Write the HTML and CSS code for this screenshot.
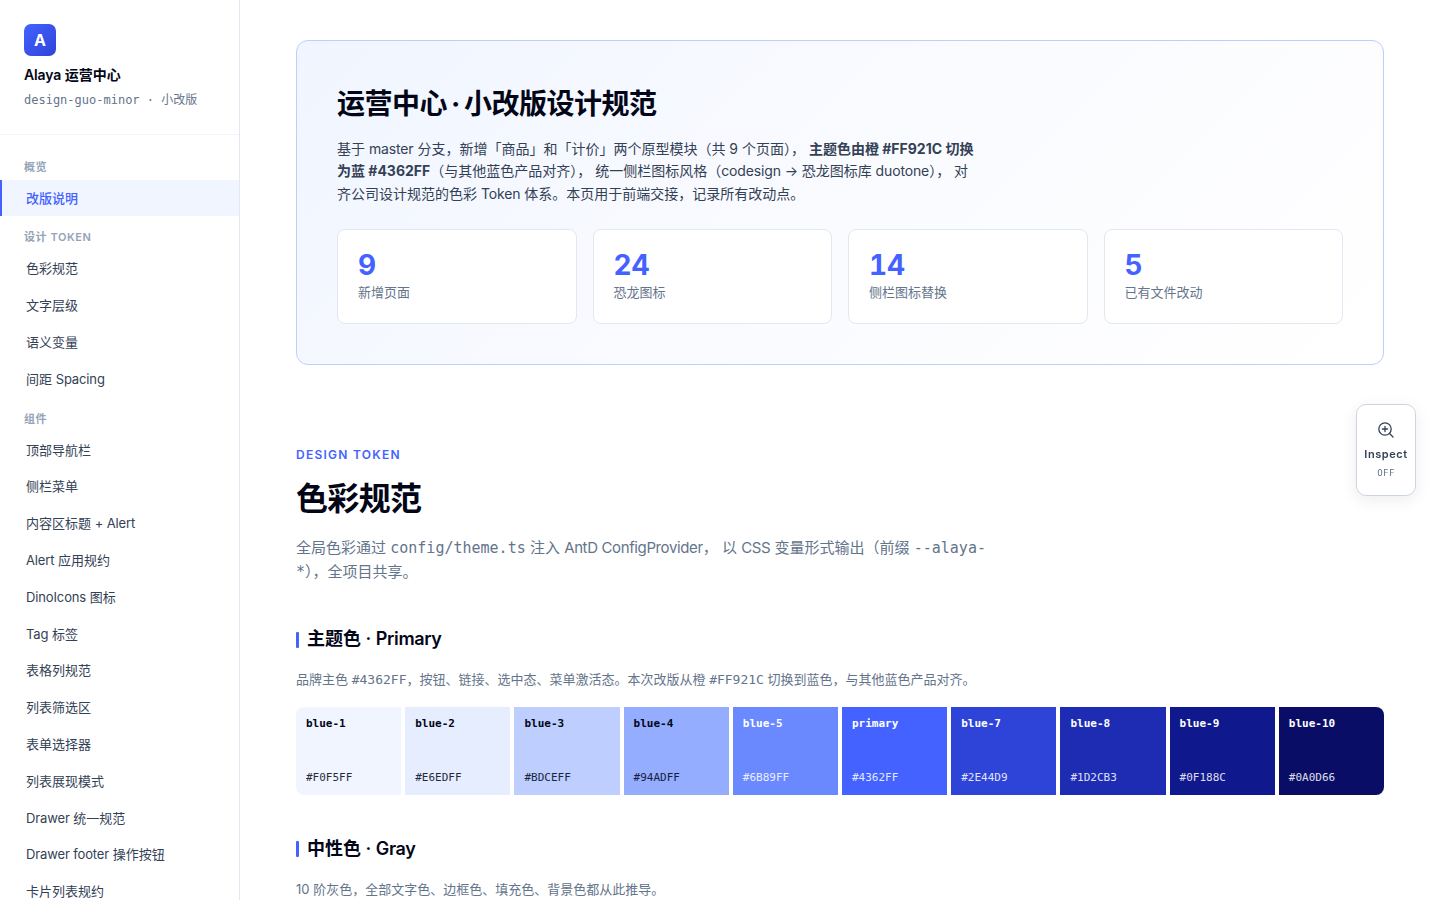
FILE: index.html
```
<!DOCTYPE html>
<html lang="zh-CN">
<head>
    <meta charset="UTF-8">
    <meta name="viewport" content="width=device-width, initial-scale=1.0">
    <title>Alaya 运营中心 · 小改版设计规范</title>
    <link rel="stylesheet" href="styles.css">
</head>
<body>
    <aside class="sidebar">
        <div class="sidebar-header">
            <div class="logo">A</div>
            <div class="sidebar-title"><span class="en">Alaya</span> 运营中心</div>
            <div class="sidebar-sub">design-guo-minor · 小改版</div>
        </div>
        <nav class="nav">
            <div class="nav-group">概览</div>
            <a class="nav-item active" href="#intro">改版说明</a>
            <div class="nav-group">设计 Token</div>
            <a class="nav-item" href="#color">色彩规范</a>
            <a class="nav-item" href="#typo">文字层级</a>
            <a class="nav-item" href="#vars">语义变量</a>
            <a class="nav-item" href="#spacing">间距 <span class="en">Spacing</span></a>
            <div class="nav-group">组件</div>
            <a class="nav-item" href="#topnav">顶部导航栏</a>
            <a class="nav-item" href="#sidemenu">侧栏菜单</a>
            <a class="nav-item" href="#content">内容区标题 <span class="en">+ Alert</span></a>
            <a class="nav-item" href="#alert"><span class="en">Alert</span> 应用规约</a>
            <a class="nav-item" href="#icons"><span class="en">DinoIcons</span> 图标</a>
            <a class="nav-item" href="#tag"><span class="en">Tag</span> 标签</a>
            <a class="nav-item" href="#table">表格列规范</a>
            <a class="nav-item" href="#filter">列表筛选区</a>
            <a class="nav-item" href="#select">表单选择器</a>
            <a class="nav-item" href="#list">列表展现模式</a>
            <a class="nav-item" href="#drawer"><span class="en">Drawer</span> 统一规范</a>
            <a class="nav-item" href="#drawer-footer"><span class="en">Drawer footer</span> 操作按钮</a>
            <a class="nav-item" href="#cards">卡片列表规约</a>
        </nav>
    </aside>

    <main class="main">
        <section class="hero" id="intro">
            <h1>运营中心 · 小改版设计规范</h1>
            <p>
                基于 <span class="en">master</span> 分支，新增「商品」和「计价」两个原型模块（共 9 个页面），
                <strong>主题色由橙 #FF921C 切换为蓝 #4362FF</strong>（与其他蓝色产品对齐），
                统一侧栏图标风格（<span class="en">codesign → </span>恐龙图标库 <span class="en">duotone</span>），
                对齐公司设计规范的色彩 <span class="en">Token</span> 体系。本页用于前端交接，记录所有改动点。
            </p>
            <div class="stats">
                <div class="stat">
                    <div class="stat-num">9</div>
                    <div class="stat-label">新增页面</div>
                </div>
                <div class="stat">
                    <div class="stat-num">24</div>
                    <div class="stat-label">恐龙图标</div>
                </div>
                <div class="stat">
                    <div class="stat-num">14</div>
                    <div class="stat-label">侧栏图标替换</div>
                </div>
                <div class="stat">
                    <div class="stat-num">5</div>
                    <div class="stat-label">已有文件改动</div>
                </div>
            </div>
        </section>

        <section class="section" id="color">
            <div class="eyebrow">Design Token</div>
            <h2>色彩规范</h2>
            <p class="lead">
                全局色彩通过 <code>config/theme.ts</code> 注入 <span class="en">AntD ConfigProvider</span>，
                以 <span class="en">CSS</span> 变量形式输出（前缀 <code>--alaya-*</code>），全项目共享。
            </p>

            <h3>主题色 · <span class="en">Primary</span></h3>
            <p class="desc">品牌主色 <code>#4362FF</code>，按钮、链接、选中态、菜单激活态。本次改版从橙 <code>#FF921C</code> 切换到蓝色，与其他蓝色产品对齐。</p>
            <div class="palette">
                <div class="swatch blue-1"><b>blue-1</b><span>#F0F5FF</span></div>
                <div class="swatch blue-2"><b>blue-2</b><span>#E6EDFF</span></div>
                <div class="swatch blue-3"><b>blue-3</b><span>#BDCEFF</span></div>
                <div class="swatch blue-4"><b>blue-4</b><span>#94ADFF</span></div>
                <div class="swatch blue-5 on-dark"><b>blue-5</b><span>#6B89FF</span></div>
                <div class="swatch primary on-dark"><b>primary</b><span>#4362FF</span></div>
                <div class="swatch blue-7 on-dark"><b>blue-7</b><span>#2E44D9</span></div>
                <div class="swatch blue-8 on-dark"><b>blue-8</b><span>#1D2CB3</span></div>
                <div class="swatch blue-9 on-dark"><b>blue-9</b><span>#0F188C</span></div>
                <div class="swatch blue-10 on-dark"><b>blue-10</b><span>#0A0D66</span></div>
            </div>

            <h3>中性色 · <span class="en">Gray</span></h3>
            <p class="desc">10 阶灰色，全部文字色、边框色、填充色、背景色都从此推导。</p>
        </section>
    </main>

    <button class="inspect" type="button">
        <svg width="18" height="18" viewBox="0 0 18 18" fill="none" stroke="currentColor" stroke-width="1.3" stroke-linecap="round">
            <circle cx="8" cy="8" r="6.2"/>
            <path d="M12.5 12.5L16 16M8 5.4v5.2M5.4 8h5.2"/>
        </svg>
        <span class="inspect-label">Inspect</span>
        <span class="inspect-state">OFF</span>
    </button>
</body>
</html>
```
FILE: styles.css
```
:root {
    --primary: #4362ff;
    --text: #020617;
    --text-2: #334155;
    --text-3: #64748b;
    --text-4: #94a3b8;
    --border: #e2e8f0;
    --mono: "DejaVu Sans Mono", "Noto Sans CJK SC", monospace;
}
* {
    box-sizing: border-box;
    margin: 0;
    padding: 0;
}
html, body {
    height: 100%;
    overflow: hidden;
}
body {
    display: flex;
    font-family: Inter, "Noto Sans CJK SC", sans-serif;
    font-size: 14px;
    line-height: 1.6;
    color: var(--text);
    background: #fff;
}
code {
    font-family: var(--mono);
    line-height: 1;
}
.en {
    letter-spacing: -0.01em;
}

/* Sidebar */
.sidebar {
    width: 240px;
    flex-shrink: 0;
    height: 100vh;
    overflow: hidden;
    border-right: 1px solid var(--border);
}
.sidebar-header {
    padding: 24px 24px 23px;
    border-bottom: 1px solid #f1f5f9;
}
.logo {
    width: 32px;
    height: 32px;
    margin-bottom: 8px;
    border-radius: 7px;
    background: linear-gradient(135deg, #4362ff, #2e44d9);
    color: #fff;
    font-size: 16px;
    font-weight: 700;
    line-height: 33px;
    text-align: center;
}
.sidebar-title {
    font-size: 14px;
    font-weight: 600;
    line-height: 22.4px;
}
.sidebar-sub {
    margin-top: 5px;
    font-family: var(--mono);
    font-size: 12px;
    line-height: 19.2px;
    color: var(--text-3);
    white-space: nowrap;
}
.nav {
    padding: 11px 0;
}
.nav-group {
    padding: 12px 24px 4px;
    font-size: 11px;
    font-weight: 600;
    line-height: 18px;
    letter-spacing: 0.05em;
    text-transform: uppercase;
    color: var(--text-4);
}
.nav-item {
    display: block;
    padding: 8px 24px;
    border-left: 2px solid transparent;
    font-size: 13px;
    line-height: 20.8px;
    color: var(--text-2);
    text-decoration: none;
}
.nav-item.active {
    border-left-color: var(--primary);
    background: #f0f5ff;
    color: var(--primary);
    font-weight: 500;
}

/* Content */
.main {
    flex: 1;
    min-width: 0;
    height: 100vh;
    overflow: hidden;
    padding: 40px 56px;
}
.hero {
    padding: 40px;
    border: 1px solid #bdceff;
    border-radius: 12px;
    background: linear-gradient(135deg, #f0f5ff 0%, #fafbff 50%, #fff 100%);
}
.hero h1 {
    padding-top: 1px;
    margin-bottom: 11px;
    font-size: 28px;
    font-weight: 700;
    line-height: 44.8px;
    letter-spacing: -0.018em;
    word-spacing: -2px;
}
.hero p {
    max-width: 640px;
    margin-bottom: 24px;
    line-height: 22.4px;
    color: var(--text-2);
}
.stats {
    display: grid;
    grid-template-columns: repeat(4, 1fr);
    gap: 16px;
}
.stat {
    padding: 20px;
    border: 1px solid var(--border);
    border-radius: 8px;
    background: #fff;
}
.stat-num {
    padding-top: 1px;
    margin-bottom: 3px;
    font-size: 28px;
    font-weight: 700;
    font-variant-numeric: tabular-nums;
    line-height: 28px;
    color: var(--primary);
}
.stat-label {
    font-size: 13px;
    line-height: 20.8px;
    color: var(--text-3);
}
.section {
    margin-top: 80px;
}
.eyebrow {
    margin-bottom: 9px;
    font-size: 12px;
    font-weight: 600;
    line-height: 19.2px;
    letter-spacing: 0.105em;
    text-transform: uppercase;
    color: var(--primary);
}
h2 {
    margin-bottom: 12px;
    font-size: 32px;
    font-weight: 700;
    line-height: 51.2px;
    letter-spacing: -0.02em;
}
.lead {
    max-width: 720px;
    padding-bottom: 1px;
    font-size: 15px;
    line-height: 24px;
    color: var(--text-3);
}
.lead .en {
    letter-spacing: -0.025em;
}
h3 {
    display: flex;
    align-items: center;
    margin: 40px 0 15px;
    font-size: 18px;
    font-weight: 600;
    line-height: 28.8px;
    white-space: pre;
}
h3 .en {
    letter-spacing: -0.02em;
}
h3::before {
    content: "";
    width: 3px;
    height: 16px;
    margin-right: 8px;
    border-radius: 1px;
    background: var(--primary);
}
.desc {
    margin-bottom: 17px;
    font-size: 13px;
    line-height: 20.8px;
    color: var(--text-3);
}
.palette {
    display: grid;
    grid-template-columns: repeat(10, 1fr);
    gap: 4px;
    border-radius: 8px;
    overflow: hidden;
}
.swatch {
    display: flex;
    flex-direction: column;
    justify-content: space-between;
    height: 88px;
    padding: 8px 10px;
    font-family: var(--mono);
    font-size: 11px;
    line-height: 17.6px;
}
.swatch span {
    opacity: 0.85;
}
.on-dark {
    color: #fff;
}
.blue-1 { background: #f0f5ff; }
.blue-2 { background: #e6edff; }
.blue-3 { background: #bdceff; }
.blue-4 { background: #94adff; }
.blue-5 { background: #6b89ff; }
.primary { background: #4362ff; }
.blue-7 { background: #2e44d9; }
.blue-8 { background: #1d2cb3; }
.blue-9 { background: #0f188c; }
.blue-10 { background: #0a0d66; }

/* Floating inspect toggle */
.inspect {
    position: fixed;
    top: 404px;
    right: 24px;
    display: flex;
    flex-direction: column;
    align-items: center;
    gap: 6px;
    width: 60px;
    height: 92px;
    padding: 16px 0 0;
    border: 1px solid #cbd5e1;
    border-radius: 10px;
    background: #fff;
    box-shadow: 0 4px 16px rgba(15, 23, 42, 0.08);
    color: var(--text-2);
    font-family: inherit;
}
.inspect-label {
    font-size: 11px;
    font-weight: 600;
    line-height: 18px;
    letter-spacing: 0.05em;
}
.inspect-state {
    margin-top: -3px;
    font-family: var(--mono);
    font-size: 9px;
    line-height: 14px;
    letter-spacing: 0.05em;
    color: var(--text-3);
}
```
